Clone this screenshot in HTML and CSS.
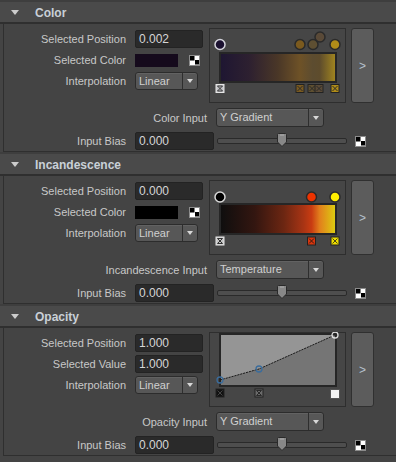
FILE: index.html
```html
<!DOCTYPE html>
<html>
<head>
<meta charset="utf-8">
<link rel="stylesheet" href="styles.css">
</head>
<body>
<div class="panel">

<section class="sec">
  <div class="hdr"><span class="tri"></span><span class="title">Color</span></div>
  <div class="body">
    <div class="top">
      <div class="fields">
        <div class="row"><span class="lbl">Selected Position</span><div class="field">0.002</div></div>
        <div class="row"><span class="lbl">Selected Color</span><div class="swatch purple"></div><span class="checker"></span></div>
        <div class="row"><span class="lbl">Interpolation</span><div class="drop small"><span class="val">Linear</span><span class="arr"></span></div></div>
      </div>
      <svg class="ramp" width="137" height="75" viewBox="0 0 137 75">
        <defs>
          <linearGradient id="g1" x1="0" x2="1" y1="0" y2="0">
            <stop offset="0" stop-color="#1e1632"/>
            <stop offset="0.25" stop-color="#2d2030"/>
            <stop offset="0.5" stop-color="#4a3727"/>
            <stop offset="0.69" stop-color="#6e5227"/>
            <stop offset="0.8" stop-color="#5c4c30"/>
            <stop offset="0.86" stop-color="#5e4c2c"/>
            <stop offset="1" stop-color="#a3871f"/>
          </linearGradient>
        </defs>
        <rect x="0.5" y="0.5" width="136" height="74" fill="#464646" stroke="#2e2e2e"/>
        <rect x="11" y="25" width="116" height="29" fill="url(#g1)" stroke="#262626" stroke-width="2"/>
        <circle cx="11" cy="16.5" r="5" fill="#1a1030" stroke="#d4d4dc" stroke-width="1.5"/>
        <circle cx="91" cy="16.5" r="5" fill="#7b5a1e" stroke="#2a2a2a" stroke-width="1.5"/>
        <circle cx="104" cy="16.5" r="5" fill="#5e4f32" stroke="#2a2a2a" stroke-width="1.5"/>
        <circle cx="111" cy="9" r="5" fill="#5a4a38" stroke="#2a2a2a" stroke-width="1.5"/>
        <circle cx="126" cy="16.5" r="5" fill="#b08c18" stroke="#2a2a2a" stroke-width="1.5"/>
        <g transform="translate(11 56.5)"><rect x="-4" y="0" width="8" height="8" fill="#c4c4c8" stroke="#e6e6e6"/><path d="M-2.5 1.5 L2.5 6.5 M2.5 1.5 L-2.5 6.5 M-2.5 1.5 H2.5 M-2.5 6.5 H2.5" stroke="#333" fill="none"/></g>
        <g transform="translate(91 56.5)"><rect x="-4" y="0" width="8" height="8" fill="#7a5a20" stroke="#222"/><path d="M-2.5 1.5 L2.5 6.5 M2.5 1.5 L-2.5 6.5" stroke="#2a2a2a" fill="none"/></g>
        <g transform="translate(103 56.5)"><rect x="-4" y="0" width="8" height="8" fill="#5e4f30" stroke="#222"/><path d="M-2.5 1.5 L2.5 6.5 M2.5 1.5 L-2.5 6.5" stroke="#2a2a2a" fill="none"/></g>
        <g transform="translate(110 56.5)"><rect x="-4" y="0" width="8" height="8" fill="#5a4a36" stroke="#222"/><path d="M-2.5 1.5 L2.5 6.5 M2.5 1.5 L-2.5 6.5" stroke="#2a2a2a" fill="none"/></g>
        <g transform="translate(126 56.5)"><rect x="-4" y="0" width="8" height="8" fill="#b08c18" stroke="#222"/><path d="M-2.5 1.5 L2.5 6.5 M2.5 1.5 L-2.5 6.5" stroke="#2a2a2a" fill="none"/></g>
      </svg>
      <div class="btn">&gt;</div>
    </div>
    <div class="row irow"><span class="lbl wide">Color Input</span><div class="drop big"><span class="val">Y Gradient</span><span class="arr"></span></div></div>
    <div class="row brow"><span class="lbl">Input Bias</span><div class="field bias">0.000</div><div class="slider"><svg class="thumb" width="10" height="14" viewBox="0 0 10 14"><path d="M1.5 0.5 H8.5 Q9.5 0.5 9.5 1.5 V9 L5 13.5 L0.5 9 V1.5 Q0.5 0.5 1.5 0.5 Z" fill="#888" stroke="#2a2a2a"/><path d="M3 2 H7" stroke="#b0b0b0"/></svg></div><span class="checker cb"></span></div>
  </div>
</section>

<section class="sec">
  <div class="hdr"><span class="tri"></span><span class="title">Incandescence</span></div>
  <div class="body">
    <div class="top">
      <div class="fields">
        <div class="row"><span class="lbl">Selected Position</span><div class="field">0.000</div></div>
        <div class="row"><span class="lbl">Selected Color</span><div class="swatch black"></div><span class="checker"></span></div>
        <div class="row"><span class="lbl">Interpolation</span><div class="drop small"><span class="val">Linear</span><span class="arr"></span></div></div>
      </div>
      <svg class="ramp" width="137" height="75" viewBox="0 0 137 75">
        <defs>
          <linearGradient id="g2" x1="0" x2="1" y1="0" y2="0">
            <stop offset="0" stop-color="#0e0e0e"/>
            <stop offset="0.3" stop-color="#331610"/>
            <stop offset="0.55" stop-color="#6c2612"/>
            <stop offset="0.72" stop-color="#a83414"/>
            <stop offset="0.79" stop-color="#c93c12"/>
            <stop offset="0.86" stop-color="#e2801c"/>
            <stop offset="1" stop-color="#dcd010"/>
          </linearGradient>
        </defs>
        <rect x="0.5" y="0.5" width="136" height="74" fill="#464646" stroke="#2e2e2e"/>
        <rect x="11" y="24" width="116" height="30" fill="url(#g2)" stroke="#262626" stroke-width="2"/>
        <circle cx="11" cy="17" r="5" fill="#000" stroke="#d8d8d8" stroke-width="1.5"/>
        <circle cx="102.5" cy="17" r="5" fill="#ee3300" stroke="#2a2a2a" stroke-width="1.5"/>
        <circle cx="126" cy="17" r="5" fill="#ffee00" stroke="#2a2a2a" stroke-width="1.5"/>
        <g transform="translate(11 57)"><rect x="-4" y="0" width="8" height="8" fill="#c4c4c4" stroke="#e6e6e6"/><path d="M-2.5 1.5 L2.5 6.5 M2.5 1.5 L-2.5 6.5 M-2.5 1.5 H2.5 M-2.5 6.5 H2.5" stroke="#333" fill="none"/></g>
        <g transform="translate(102.5 57)"><rect x="-4" y="0" width="8" height="8" fill="#d8360e" stroke="#222"/><path d="M-2.5 1.5 L2.5 6.5 M2.5 1.5 L-2.5 6.5" stroke="#3a1a10" fill="none"/></g>
        <g transform="translate(126 57)"><rect x="-4" y="0" width="8" height="8" fill="#eedd00" stroke="#222"/><path d="M-2.5 1.5 L2.5 6.5 M2.5 1.5 L-2.5 6.5" stroke="#4a4a10" fill="none"/></g>
      </svg>
      <div class="btn">&gt;</div>
    </div>
    <div class="row irow"><span class="lbl wide">Incandescence Input</span><div class="drop big"><span class="val">Temperature</span><span class="arr"></span></div></div>
    <div class="row brow"><span class="lbl">Input Bias</span><div class="field bias">0.000</div><div class="slider"><svg class="thumb" width="10" height="14" viewBox="0 0 10 14"><path d="M1.5 0.5 H8.5 Q9.5 0.5 9.5 1.5 V9 L5 13.5 L0.5 9 V1.5 Q0.5 0.5 1.5 0.5 Z" fill="#888" stroke="#2a2a2a"/><path d="M3 2 H7" stroke="#b0b0b0"/></svg></div><span class="checker cb"></span></div>
  </div>
</section>

<section class="sec">
  <div class="hdr"><span class="tri"></span><span class="title">Opacity</span></div>
  <div class="body">
    <div class="top">
      <div class="fields">
        <div class="row"><span class="lbl">Selected Position</span><div class="field">1.000</div></div>
        <div class="row"><span class="lbl">Selected Value</span><div class="field">1.000</div></div>
        <div class="row"><span class="lbl">Interpolation</span><div class="drop small"><span class="val">Linear</span><span class="arr"></span></div></div>
      </div>
      <svg class="ramp" width="137" height="75" viewBox="0 0 137 75">
        <rect x="0.5" y="0.5" width="136" height="74" fill="#464646" stroke="#2e2e2e"/>
        <polygon points="11,2 127,2 126,3 50,37 11,48" fill="#959595"/>
        <polygon points="11,48 50,37 126,3 127,3 127,54 11,54" fill="#757575"/>
        <rect x="11" y="2" width="116" height="52" fill="none" stroke="#262626" stroke-width="2"/>
        <polyline points="11,48 50,37 126,3" fill="none" stroke="#1c1c1c" stroke-width="1" stroke-dasharray="2 1"/>
        <circle cx="11" cy="48" r="3" fill="none" stroke="#3a6c9c" stroke-width="1.3"/>
        <circle cx="50" cy="37" r="3" fill="none" stroke="#3a6c9c" stroke-width="1.3"/>
        <circle cx="126" cy="3" r="3" fill="none" stroke="#e0e0e0" stroke-width="1.3"/>
        <g transform="translate(11 57)"><rect x="-4" y="0" width="8" height="8" fill="#111" stroke="#222"/><path d="M-2.5 1.5 L2.5 6.5 M2.5 1.5 L-2.5 6.5" stroke="#444" fill="none"/></g>
        <g transform="translate(50 57)"><rect x="-4" y="0" width="8" height="8" fill="#6a6a6a" stroke="#222"/><path d="M-2.5 1.5 L2.5 6.5 M2.5 1.5 L-2.5 6.5 M-2.5 1.5 H2.5 M-2.5 6.5 H2.5" stroke="#2a2a2a" fill="none"/></g>
        <rect x="121.5" y="57.5" width="9" height="9" fill="#f4f4f4" stroke="#555"/>
      </svg>
      <div class="btn">&gt;</div>
    </div>
    <div class="row irow"><span class="lbl wide">Opacity Input</span><div class="drop big"><span class="val">Y Gradient</span><span class="arr"></span></div></div>
    <div class="row brow"><span class="lbl">Input Bias</span><div class="field bias">0.000</div><div class="slider"><svg class="thumb" width="10" height="14" viewBox="0 0 10 14"><path d="M1.5 0.5 H8.5 Q9.5 0.5 9.5 1.5 V9 L5 13.5 L0.5 9 V1.5 Q0.5 0.5 1.5 0.5 Z" fill="#888" stroke="#2a2a2a"/><path d="M3 2 H7" stroke="#b0b0b0"/></svg></div><span class="checker cb"></span></div>
  </div>
</section>

</div>
</body>
</html>
```

FILE: styles.css
```css
* { box-sizing: border-box; margin: 0; padding: 0; }
html, body { margin: 0; background: #444444; }
body {
  width: 396px;
  height: 462px;
  overflow: hidden;
  font-family: "Liberation Sans", Arial, sans-serif;
  font-size: 11px;
  color: #c8c8c8;
}
.hdr {
  height: 24px;
  background: #4a4a4a;
  box-shadow: inset 0 2px #3e3e3e;
  border-bottom: 2px solid #2f2f2f;
  display: flex;
  align-items: center;
  padding-top: 3px;
}
.tri {
  width: 0;
  height: 0;
  border-left: 4px solid transparent;
  border-right: 4px solid transparent;
  border-top: 5px solid #cccccc;
  margin-left: 11px;
  margin-right: 16px;
}
.title { font-weight: bold; font-size: 12px; color: #c9d0d7; }
.body {
  margin-left: 3px;
  border-left: 1px solid #2f2f2f;
  border-bottom: 1px solid #2f2f2f;
  height: 128px;
  padding-top: 4px;
}
.top { display: flex; height: 75px; }
.fields { width: 202px; padding-top: 2px; display: flex; flex-direction: column; gap: 3px; }
.row { display: flex; align-items: center; height: 18px; }
.lbl { width: 122px; margin-right: 9px; text-align: right; white-space: nowrap; color: #c8c8c8; }
.lbl.wide { width: 203px; }
.field {
  width: 68px;
  height: 18px;
  background: #2a2a2a;
  border: 1px solid #232323;
  border-radius: 2px;
  padding-left: 3px;
  line-height: 16px;
  font-size: 12px;
  color: #d6d6d6;
}
.field.bias { width: 79px; }
.swatch { width: 43px; height: 13px; }
.swatch.purple { background: #150a1c; }
.swatch.black { background: #000; }
.checker {
  width: 11px;
  height: 11px;
  margin-left: 11px;
  border: 1px solid #8c8c8c;
  background:
    linear-gradient(#000, #000) left top / 50% 50% no-repeat,
    linear-gradient(#000, #000) right bottom / 50% 50% no-repeat,
    #fff;
}
.checker.cb { margin-left: 8px; }
.drop {
  display: flex;
  height: 18px;
  border: 1px solid #2c2c2c;
  border-radius: 3px;
  background: #575757;
  box-shadow: inset 0 1px #626262;
}
.drop.small { width: 63px; }
.drop.big { width: 108px; height: 19px; }
.drop .val { flex: 1; padding-left: 3px; line-height: 16px; color: #d0d0d0; white-space: nowrap; }
.drop .arr {
  width: 15px;
  border-left: 1px solid #2e2e2e;
  display: flex;
  align-items: center;
  justify-content: center;
}
.drop .arr::after {
  content: "";
  border-left: 3.5px solid transparent;
  border-right: 3.5px solid transparent;
  border-top: 4px solid #d8d8d8;
}
.ramp { display: block; margin-left: 3px; flex: none; }
.btn {
  width: 23px;
  height: 75px;
  margin-left: 5px;
  border: 1px solid #303030;
  border-radius: 3px;
  background: #5c5c5c;
  display: flex;
  align-items: center;
  justify-content: center;
  color: #b6c2ce;
  font-size: 12px;
}
.irow { margin-top: 5px; height: 19px; }
.brow { margin-top: 5px; }
.slider { position: relative; width: 130px; height: 18px; margin-left: 3px; }
.slider::before {
  content: "";
  position: absolute;
  left: 0;
  right: 0;
  top: 6px;
  height: 4px;
  border: 1px solid #2a2a2a;
  border-radius: 2px;
  background: #4e4e4e;
}
.thumb { position: absolute; left: 60px; top: 1px; }
```
